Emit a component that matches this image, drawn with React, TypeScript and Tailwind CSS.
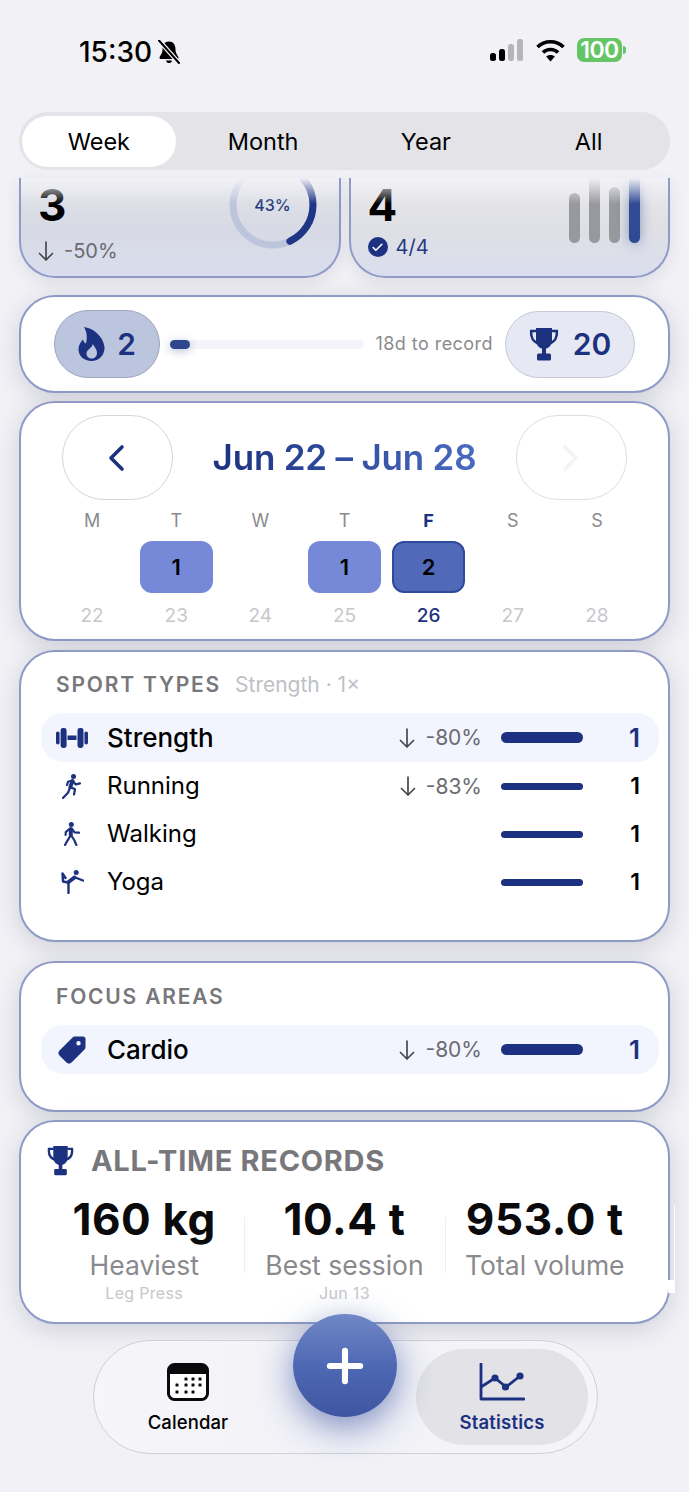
import { Check, Plus } from "lucide-react"

const navy = "#1c317f"

function Trophy({ className }: { className?: string }) {
  return (
    <svg viewBox="0 0 30 34" className={className} fill="none">
      <path d="M7 1H23V13C23 18.5 19.5 22 15 22C10.5 22 7 18.5 7 13Z" fill={navy} />
      <path d="M7.5 4H2.2C1.5 10 4 15 10 16.5M22.5 4H27.8C28.5 10 26 15 20 16.5" stroke={navy} strokeWidth="2.6" />
      <rect x="13" y="21" width="4" height="7" fill={navy} />
      <rect x="8" y="26.5" width="14" height="7" rx="1.5" fill={navy} />
    </svg>
  )
}

function Flame({ className }: { className?: string }) {
  return (
    <svg viewBox="0 0 27 34" className={className}>
      <path
        fillRule="evenodd"
        fill={navy}
        d="M6 0C14 1 25 8 26.5 20C27 28 21 34 13.5 34C6 34 0.5 29 0.5 22.5C0.5 18.5 2.5 15 5 12.5C5.5 14.5 6.5 16 8 16.5C9.5 11 9 5 6 0ZM14.5 17C15 20.5 8.5 22.5 8.5 26.5C8.5 29.5 11 31.5 13.5 31.5C16.5 31.5 19 29.5 19 26C19 22.5 16.5 19.5 14.5 17Z"
      />
    </svg>
  )
}

function Dumbbell() {
  return (
    <svg viewBox="0 0 32 20" className="h-[20px] w-[32px]" fill={navy}>
      <rect x="0" y="3.5" width="3.6" height="13" rx="1.8" />
      <rect x="4.6" y="0" width="6" height="20" rx="2.4" />
      <rect x="11.5" y="7.5" width="9" height="4.5" />
      <rect x="21.5" y="0" width="6" height="20" rx="2.4" />
      <rect x="28.4" y="3.5" width="3.6" height="13" rx="1.8" />
    </svg>
  )
}

function Runner() {
  return (
    <svg viewBox="0 0 20 25" className="h-[25px] w-[20px]" fill="none" stroke={navy} strokeLinecap="round" strokeLinejoin="round">
      <circle cx="11.5" cy="2.6" r="2.5" fill={navy} stroke="none" />
      <path d="M10.6 7L8.3 13" strokeWidth="3.8" />
      <path d="M10.2 6.5L6 7.8L5 11M10.8 7L13.8 10.4L18 9.4M8.2 13L13 15.2L12 20.5M8 13.5L6.2 18.4L1 24" strokeWidth="2.2" />
    </svg>
  )
}

function Walker() {
  return (
    <svg viewBox="0 0 16 24" className="h-[24px] w-[16px]" fill="none" stroke={navy} strokeLinecap="round" strokeLinejoin="round">
      <circle cx="7.3" cy="2.6" r="2.5" fill={navy} stroke="none" />
      <path d="M6.8 7L6.8 13" strokeWidth="4" />
      <path d="M5.6 6.8L1.8 10L1.6 13M8 7L10.6 10.4L15 10.6M6.6 13.5L3.6 18.4L1 23M7.2 13.5L10.2 18L12.4 23" strokeWidth="2.2" />
    </svg>
  )
}

function Yoga() {
  return (
    <svg viewBox="0 0 23 24" className="h-[24px] w-[23px]" fill="none" stroke={navy} strokeLinecap="round" strokeLinejoin="round">
      <circle cx="15.2" cy="2.6" r="2.5" fill={navy} stroke="none" />
      <path d="M7.5 13.5V23" strokeWidth="2.4" />
      <path d="M7.5 12L13.5 7.5" strokeWidth="4" />
      <path d="M13 7L22 10.5M7 12.5L2 11.5L1.5 3.5L4.5 8" strokeWidth="2.4" />
    </svg>
  )
}

function Tag() {
  return (
    <svg viewBox="0 0 30 30" className="h-[30px] w-[30px]">
      <path
        fillRule="evenodd"
        fill={navy}
        d="M18 1.5L26 1.5C27.5 1.5 28.5 2.5 28.5 4L28.5 12C28.5 13 28 14 27.5 14.5L14.5 27.5C13 29 11 29 9.5 27.5L2.5 20.5C1 19 1 17 2.5 15.5L15.5 2.5C16 2 17 1.5 18 1.5ZM21.5 6A2.2 2.2 0 1 0 21.5 10.4A2.2 2.2 0 1 0 21.5 6Z"
      />
    </svg>
  )
}

function Chevron({ flip, color }: { flip?: boolean; color: string }) {
  return (
    <svg viewBox="0 0 18 28" className={`h-[28px] w-[18px] ${flip ? "rotate-180" : "mr-[3px]"}`} fill="none" stroke={color} strokeWidth="3.6" strokeLinecap="round" strokeLinejoin="round">
      <path d="M15 3L4 14L15 25" />
    </svg>
  )
}

function DownArrow() {
  return (
    <svg viewBox="0 0 16 20" className="h-[20px] w-[16px]" fill="none" stroke="#48484c" strokeWidth="1.7" strokeLinecap="round" strokeLinejoin="round">
      <path d="M8 1V19M1.5 12.5L8 19L14.5 12.5" />
    </svg>
  )
}

function Delta({ value }: { value: string }) {
  return (
    <div className="flex items-center gap-[10px] text-[21px] leading-none text-[#6b6b70]">
      <DownArrow />
      {value}
    </div>
  )
}

const sports = [
  { name: "Strength", delta: "-80%", icon: <Dumbbell />, active: true },
  { name: "Running", delta: "-83%", icon: <Runner /> },
  { name: "Walking", icon: <Walker /> },
  { name: "Yoga", icon: <Yoga /> },
]

function TypeRow({ name, delta, icon, active }: { name: string; delta?: string; icon: React.ReactNode; active?: boolean }) {
  return (
    <div className={`flex items-center pl-[15px] pr-[19px] ${active ? "h-[49px] rounded-[22px] bg-[#f3f5fe]" : "h-[48px]"}`}>
      <div className="flex w-[32px] justify-center">{icon}</div>
      <div className={`ml-[19px] flex-1 leading-none text-black ${active ? "text-[26px] font-medium" : "text-[24px]"}`}>{name}</div>
      {delta && <Delta value={delta} />}
      <div className={`ml-[19px] w-[82px] rounded-full bg-[#1c317f] ${active ? "h-[11px]" : "h-[7px]"}`} />
      <div className={`w-[57px] text-right font-semibold leading-none ${active ? "text-[26px] text-[#1c317f]" : "text-[23px] text-black"}`}>1</div>
    </div>
  )
}

const days = [
  { l: "M", d: "22" },
  { l: "T", d: "23", n: "1" },
  { l: "W", d: "24" },
  { l: "T", d: "25", n: "1" },
  { l: "F", d: "26", n: "2", today: true },
  { l: "S", d: "27" },
  { l: "S", d: "28" },
]

const records = [
  { v: "160 kg", l: "Heaviest", s: "Leg Press" },
  { v: "10.4 t", l: "Best session", s: "Jun 13" },
  { v: "953.0 t", l: "Total volume" },
]

const card = "rounded-[36px] border-2 border-[#8f9bc6] bg-white shadow-[0_6px_24px_rgba(60,60,90,0.18)]"

export default function App() {
  return (
    <div className="relative h-[1492px] w-[689px] overflow-hidden bg-[#f1f1f6] [font-family:Inter,sans-serif] text-black">
      <div className="flex h-[112px] items-start justify-between pl-[79px] pr-[63px] pt-[38px]">
        <div className="flex items-center gap-[5px]">
          <span className="text-[28px] font-medium leading-[28px]">15:30</span>
          <svg viewBox="0 0 24 24" className="h-[24px] w-[24px]">
            <path d="M12 1.5C7.5 1.5 5.5 5 5.5 9.5C5.5 13.5 3 15.5 2.5 17.5C2.5 18.5 3 19 4 19H20C21 19 21.5 18.5 21.5 17.5C21 15.5 18.5 13.5 18.5 9.5C18.5 5 16.5 1.5 12 1.5Z" fill="#000" />
            <path d="M9 20.5C9.5 22.5 10.5 23 12 23C13.5 23 14.5 22.5 15 20.5Z" fill="#000" />
            <path d="M2 0.5L22 23" stroke="#f1f1f6" strokeWidth="4.5" />
            <path d="M2 0.5L22 23" stroke="#000" strokeWidth="2" strokeLinecap="round" />
          </svg>
        </div>
        <div className="flex items-center gap-[11px]">
          <svg viewBox="0 0 34 22" className="h-[22px] w-[34px]">
            <rect x="0" y="14" width="6" height="8" rx="2.5" fill="#000" />
            <rect x="9" y="10" width="6" height="12" rx="2.5" fill="#000" />
            <rect x="18" y="5" width="6" height="17" rx="2.5" fill="#b5b5ba" />
            <rect x="27" y="0" width="6" height="22" rx="2.5" fill="#b5b5ba" />
          </svg>
          <svg viewBox="0 0 30 24" className="h-[24px] w-[31px]" fill="none" stroke="#000" strokeWidth="3.6">
            <path d="M2 9C9 2 21 2 28 9" />
            <path d="M7.5 14.5C11.5 10.5 18.5 10.5 22.5 14.5" />
            <path d="M15 23.5L10.6 18.5C13 16.5 17 16.5 19.4 18.5Z" fill="#000" stroke="none" />
          </svg>
          <div className="flex items-center gap-[1px]">
            <div className="flex h-[24px] w-[45px] items-center justify-center rounded-[7px] bg-[#65c466] text-[23px] font-semibold leading-none tracking-[-0.5px] text-white">100</div>
            <div className="h-[8px] w-[3px] rounded-r-full bg-[#65c466]" />
          </div>
        </div>
      </div>

      <div className="flex flex-col px-[19px]">
        <div className="grid h-[58px] grid-cols-4 rounded-full bg-[#e3e3e8] pt-[1px] text-[23.5px] leading-none">
          <div className="my-[3px] ml-[3px] mr-[6px] flex items-center justify-center rounded-full bg-white">Week</div>
          <div className="flex items-center justify-center">Month</div>
          <div className="flex items-center justify-center">Year</div>
          <div className="flex items-center justify-center">All</div>
        </div>

        <div className="mt-[8px] grid h-[100px] grid-cols-2 gap-[8px]">
          <div className="relative flex justify-between overflow-hidden rounded-b-[36px] border-2 border-t-0 border-[#8f9bc6] bg-gradient-to-b from-[#e4e5ea] via-[#d7dae4] to-[#dadded] pl-[17px] pr-[22px] shadow-[0_6px_16px_rgba(60,60,90,0.1)]">
            <div className="pt-[10px]">
              <div className="text-[44px] font-bold leading-[34px]">3</div>
              <div className="mt-[17px] flex h-[24px] items-center gap-[10px] text-[20px] leading-none text-[#6b6b70]">
                <DownArrow />
                -50%
              </div>
            </div>
            <div className="relative -mt-[17px] h-[88px] w-[88px]">
              <svg viewBox="0 0 88 88" className="h-[88px] w-[88px] -rotate-90">
                <circle cx="44" cy="44" r="40" fill="none" stroke="#bdc5dc" strokeWidth="7" />
                <circle cx="44" cy="44" r="40" fill="none" stroke="#1f3585" strokeWidth="7" strokeLinecap="round" strokeDasharray="108 252" />
              </svg>
              <div className="absolute inset-0 flex items-center justify-center text-[16px] font-medium leading-none text-[#24397f]">43%</div>
            </div>
            <div className="absolute inset-x-0 top-0 h-[26px] bg-gradient-to-b from-[#f1f1f6] to-transparent" />
          </div>

          <div className="relative flex justify-between overflow-hidden rounded-b-[36px] border-2 border-t-0 border-[#8f9bc6] bg-gradient-to-b from-[#e8e8ec] via-[#dfe0e5] to-[#dadded] pl-[17px] pr-[28px] shadow-[0_6px_16px_rgba(60,60,90,0.1)]">
            <div className="pt-[10px]">
              <div className="text-[44px] font-bold leading-[34px]">4</div>
              <div className="mt-[15px] flex items-center gap-[8px] text-[20px] leading-none text-[#24397f]">
                <div className="flex h-[20px] w-[20px] items-center justify-center rounded-full bg-[#1c317f]">
                  <Check className="h-[13px] w-[13px] text-white" strokeWidth={3} />
                </div>
                4/4
              </div>
            </div>
            <div className="flex h-[65px] items-end gap-[9px]">
              <div className="h-[50px] w-[11px] rounded-full bg-[#98999f]" />
              <div className="h-[70px] w-[11px] rounded-full bg-[#98999f]" />
              <div className="h-[56px] w-[11px] rounded-full bg-[#98999f]" />
              <div className="h-[70px] w-[11px] rounded-full bg-[#304a94] shadow-[0_0_12px_rgba(48,74,148,0.5)]" />
            </div>
            <div className="absolute inset-x-0 top-0 h-[26px] bg-gradient-to-b from-[#f1f1f6] to-transparent" />
          </div>
        </div>

        <div className={`${card} mt-[17px] flex h-[98px] items-center pl-[33px] pr-[33px]`}>
          <div className="flex h-[68px] w-[106px] items-center justify-center gap-[12px] rounded-[34px] border border-[#9ea6c0] bg-[#bcc5de]">
            <Flame className="h-[34px] w-[27px]" />
            <span className="text-[30px] font-semibold leading-none text-[#1c317f]">2</span>
          </div>
          <div className="ml-[10px] h-[9px] flex-1 rounded-full bg-[#f4f4fa]">
            <div className="h-[9px] w-[20px] rounded-full bg-[#2f458c] shadow-[0_2px_8px_rgba(47,69,140,0.35)]" />
          </div>
          <div className="ml-[11px] text-[18px] leading-none tracking-[0.45px] text-[#8a8a8e]">18d to record</div>
          <div className="ml-[12px] flex h-[67px] w-[130px] items-center justify-center gap-[14px] rounded-[34px] border border-[#c5c8d6] bg-[#e6e8f3]">
            <Trophy className="h-[34px] w-[30px]" />
            <span className="text-[30px] font-semibold leading-none text-[#1c317f]">20</span>
          </div>
        </div>

        <div className={`${card} mt-[8px] h-[240px] px-[29px]`}>
          <div className="flex items-center justify-between px-[12px] pt-[12px]">
            <div className="flex h-[85px] w-[111px] items-center justify-center rounded-[42px] border border-[#d6d6da] bg-white">
              <Chevron color={navy} />
            </div>
            <div className="bg-gradient-to-r from-[#1c317f] to-[#4a6bc0] bg-clip-text text-[35px] font-semibold leading-none tracking-[-0.2px] text-transparent">Jun 22 – Jun 28</div>
            <div className="flex h-[85px] w-[111px] items-center justify-center rounded-[42px] border border-[#dedee2] bg-white">
              <Chevron flip color="#f4f4f8" />
            </div>
          </div>
          <div className="grid grid-cols-7 pt-[11px]">
            {days.map((day, i) => (
              <div key={i} className="flex flex-col items-center">
                <div className={`flex h-[20px] items-center text-[18px] leading-none ${day.today ? "font-bold text-[#1c317f]" : "text-[#8a8a8e]"}`}>{day.l}</div>
                <div className="mt-[10px] h-[52px] w-[73px]">
                  {day.n && (
                    <div className={`flex h-[52px] items-center justify-center rounded-[12px] text-[22px] font-semibold leading-none ${day.today ? "border-2 border-[#2f4a9c] bg-[#5069b9]" : "bg-[#7589d8]"}`}>{day.n}</div>
                  )}
                </div>
                <div className={`mt-[13px] text-[19px] leading-none ${day.today ? "font-medium text-[#1c317f]" : "text-[#c7c7cc]"}`}>{day.d}</div>
              </div>
            ))}
          </div>
        </div>

        <div className={`${card} mt-[9px] h-[292px] pl-[20px] pr-[9px] pt-[22px]`}>
          <div className="flex items-center gap-[14px] pl-[15px]">
            <span className="text-[21px] font-semibold leading-none tracking-[1.8px] text-[#77777c]">SPORT TYPES</span>
            <span className="text-[21px] leading-none text-[#c0c0c5]">Strength · 1×</span>
          </div>
          <div className="mt-[18px]">
            {sports.map((s) => (
              <TypeRow key={s.name} {...s} />
            ))}
          </div>
        </div>

        <div className={`${card} mt-[19px] h-[151px] pl-[20px] pr-[9px] pt-[23px]`}>
          <div className="pl-[15px] text-[21px] font-semibold leading-none tracking-[1.8px] text-[#77777c]">FOCUS AREAS</div>
          <div className="mt-[18px]">
            <TypeRow name="Cardio" delta="-80%" icon={<Tag />} active />
          </div>
        </div>

        <div className={`${card} mt-[8px] h-[204px] px-[23px] pt-[23px]`}>
          <div className="flex items-center gap-[17px] pl-[3px]">
            <Trophy className="h-[31px] w-[27px]" />
            <span className="text-[29px] font-bold leading-none tracking-[0.7px] text-[#77777c]">ALL-TIME RECORDS</span>
          </div>
          <div className="mt-[17px] grid grid-cols-3">
            {records.map((r, i) => (
              <div key={r.l} className="relative flex flex-col items-center">
                {i > 0 && <div className="absolute left-0 top-[24px] h-[56px] w-px bg-[#eeeef2]" />}
                <div className="text-[44px] font-bold leading-[52px] tracking-[0.6px] text-[#0b0b0d]">{r.v}</div>
                <div className="mt-[4px] text-[26.5px] leading-[32px] text-[#8a8a8e]">{r.l}</div>
                <div className="mt-[3px] text-[16px] leading-[18px] tracking-[0.3px] text-[#c7c7cc]">{r.s}</div>
              </div>
            ))}
          </div>
        </div>
      </div>

      {/* stray screen edge by the records card */}
      <div className="absolute left-[674px] top-[1205px] h-[75px] w-px bg-white" />
      <div className="absolute left-[668px] top-[1280px] h-[13px] w-[7px] bg-white" />

      <div className="absolute left-[93px] top-[1340px] flex h-[114px] w-[505px] items-center rounded-full border border-[#cfcfd4] bg-gradient-to-r from-[#f6f6fa] via-[#f1f1f7] to-[#f5f5f9] px-[9px]">
        <div className="flex w-[170px] flex-col items-center gap-[12px]">
          <svg viewBox="0 0 42 38" className="h-[38px] w-[42px]">
            <rect x="1.5" y="1.5" width="39" height="35" rx="6" fill="#fff" stroke="#0b0b0d" strokeWidth="3" />
            <path d="M1.5 11V7.5a6 6 0 0 1 6-6h27a6 6 0 0 1 6 6V11Z" fill="#0b0b0d" />
            {[[19, 16], [26, 16], [33, 16], [10, 22], [19, 22], [26, 22], [33, 22], [10, 29], [19, 29], [26, 29]].map(([x, y]) => (
              <rect key={`${x}-${y}`} x={x - 1.5} y={y - 1.5} width="3" height="3" rx="0.6" fill="#0b0b0d" />
            ))}
          </svg>
          <span className="text-[18.5px] font-medium leading-none tracking-[0.1px] text-black">Calendar</span>
        </div>
        <div className="ml-auto flex h-[96px] w-[172px] flex-col items-center justify-center gap-[12px] rounded-full bg-[#e2e2e7]">
          <svg viewBox="0 0 46 38" className="h-[38px] w-[46px]" fill="none" stroke={navy}>
            <path d="M2 1V36H45" strokeWidth="2.8" strokeLinecap="round" strokeLinejoin="round" />
            <path d="M2 24L16 15L27 24L41 13" strokeWidth="2.8" />
            <circle cx="16" cy="15" r="3.6" fill={navy} stroke="none" />
            <circle cx="26.5" cy="24" r="3.6" fill={navy} stroke="none" />
            <circle cx="41" cy="13" r="3.6" fill={navy} stroke="none" />
          </svg>
          <span className="text-[18.5px] font-semibold leading-none tracking-[0.2px] text-[#1c317f]">Statistics</span>
        </div>
      </div>

      <div className="absolute left-[293px] top-[1314px] flex h-[103px] w-[104px] items-center justify-center rounded-full bg-gradient-to-b from-[#7088c4] via-[#4f68b4] to-[#3f57a3] shadow-[0_10px_34px_rgba(63,87,163,0.65)]">
        <Plus className="h-[52px] w-[52px] text-white" strokeWidth={2.8} />
      </div>
    </div>
  )
}
